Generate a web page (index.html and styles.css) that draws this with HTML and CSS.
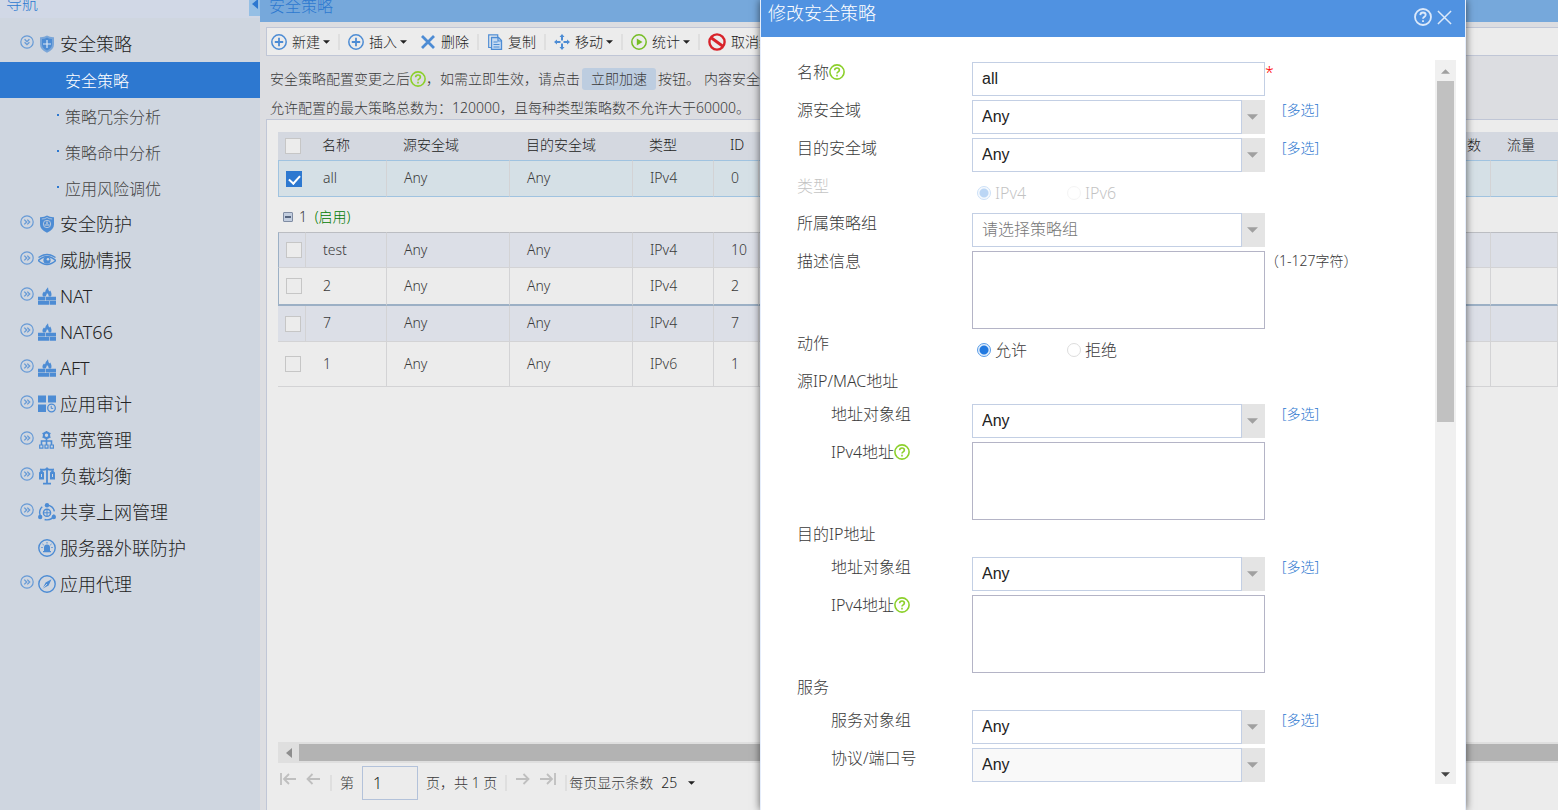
FILE: index.html
```html
<!DOCTYPE html>
<html lang="zh-CN">
<head>
    <meta charset="UTF-8">
    <meta name="viewport" content="width=device-width, initial-scale=1.0">
    <title>安全策略</title>
    <link rel="stylesheet" href="styles.css">
</head>
<body>

<svg class="sprite" aria-hidden="true">
    <symbol id="i-more" viewBox="0 0 14 14"><circle cx="7" cy="7" r="6.2" fill="none" stroke="currentColor" stroke-width="1.2"/><path d="M4.3 4.6 6.7 7 4.3 9.4M7.3 4.6 9.7 7 7.3 9.4" fill="none" stroke="currentColor" stroke-width="1.3"/></symbol>
    <symbol id="i-open" viewBox="0 0 14 14"><circle cx="7" cy="7" r="6.2" fill="none" stroke="currentColor" stroke-width="1.2"/><path d="M4.6 4.3 7 6.7 9.4 4.3M4.6 7.3 7 9.7 9.4 7.3" fill="none" stroke="currentColor" stroke-width="1.3"/></symbol>
    <symbol id="i-shield" viewBox="0 0 18 18"><path d="M2 2.2Q6 2.4 9 .4q3 2 7 1.8v7.3q0 5-7 8.3-7-3.3-7-8.3z" fill="currentColor" opacity=".65"/><path d="M4 4q3 0 5-1.5Q11 4 14 4v5.4q0 3.6-5 6.2-5-2.6-5-6.2z" fill="currentColor"/><path d="M9 5v8M5 9h8" stroke="#dbe6f4" stroke-width="1.2"/></symbol>
    <symbol id="i-guard" viewBox="0 0 18 18"><path d="M2 2.2Q6 2.4 9 .4q3 2 7 1.8v7.3q0 5-7 8.3-7-3.3-7-8.3z" fill="currentColor"/><path d="M3.8 4Q7 4 9 2.5 11 4 14.2 4" fill="none" stroke="#cfd6e0" stroke-width=".7"/><circle cx="9" cy="9" r="3.7" fill="none" stroke="#cfd6e0" stroke-width=".8"/><path d="M9 6.5V9M6.5 10h5" stroke="#cfd6e0" stroke-width="1.2"/></symbol>
    <symbol id="i-eye" viewBox="0 0 18 18"><path d="M.5 6.5Q9 .5 17.5 6.5" fill="none" stroke="currentColor" stroke-width="1.3"/><path d="M.3 9.5Q9 1.5 17.7 9.5 9 17.5.3 9.5z" fill="none" stroke="currentColor" stroke-width="1.4"/><circle cx="9" cy="9.2" r="3.6" fill="currentColor"/><circle cx="10" cy="8.2" r="1.3" fill="#cfd6e0"/></symbol>
    <symbol id="i-fire" viewBox="0 0 18 18"><path d="M5 9.5Q3.500 7 6 4.500l1 1Q7.500 2.500 10 .2q0 2.800 1.500 4.300l.8-1q2 3.500.7 6h-2.300Q11 7.500 9 6 8.500 8 7.500 9.500z" fill="currentColor"/><path d="M0 9.800h7v3.600H0zM7.600 9.800H18v3.600H7.600zM0 14h11v3.800H0zM11.600 14H18v3.800h-6.400z" fill="currentColor"/></symbol>
    <symbol id="i-audit" viewBox="0 0 18 18"><path d="M0 .5h8v7H0zM10 .5h8v7h-8zM0 9.500h8v7.500H0z" fill="currentColor"/><circle cx="13.500" cy="13" r="3.800" fill="none" stroke="currentColor" stroke-width="1.300"/><path d="M13.200 10.800v2.600h2" fill="none" stroke="currentColor"/></symbol>
    <symbol id="i-band" viewBox="0 0 18 18"><circle cx="8.500" cy="4.300" r="2.700" fill="none" stroke="currentColor" stroke-width="2"/><path d="M8.500 0v1.500M4.600 2l1.200 1M12.400 2l-1.200 1M4.600 6.600l1.200-1M12.400 6.600l-1.200-1" stroke="currentColor" stroke-width="1.500"/><path d="M8.500 7v7M3.500 14V10h10v4" fill="none" stroke="currentColor" stroke-width="1.600"/><path d="M1.700 14h3.200v3.200H1.700zM7 14h3v3.200H7zM12.200 14h3.200v3.200h-3.200z" fill="none" stroke="currentColor" stroke-width="1.200"/></symbol>
    <symbol id="i-balance" viewBox="0 0 18 18"><path d="M9 .5v16M5 16.700h8M2 2.500q4 .8 7-.8 3 1.600 7 .8" fill="none" stroke="currentColor" stroke-width="1.800"/><path d="M1 5.500 3.500 3 6 5.500v7H1zM12 5.500 14.500 3 17 5.500v7h-5z" fill="currentColor"/><path d="M3 7h1v3H3zM14 7h1v3h-1z" fill="#cfd6e0"/></symbol>
    <symbol id="i-share" viewBox="0 0 18 18"><circle cx="9" cy="9.500" r="7.400" fill="none" stroke="currentColor" stroke-width="1.400" stroke-dasharray="12 3.500" stroke-dashoffset="-2"/><circle cx="9" cy="2.200" r="2.200" fill="currentColor"/><circle cx="2.200" cy="14" r="2.200" fill="currentColor"/><circle cx="15.800" cy="14" r="2.200" fill="currentColor"/><circle cx="9" cy="9.800" r="3.600" fill="none" stroke="currentColor" stroke-width="1.400"/><path d="M5.500 9.800h7M9 6.500v6.500" stroke="currentColor"/></symbol>
    <symbol id="i-alarm" viewBox="0 0 18 18"><circle cx="9" cy="9" r="8.200" fill="none" stroke="currentColor" stroke-width="1.400"/><path d="M6 12V8.500q0-3 3-3t3 3V12h1v1.300H5V12z" fill="currentColor"/><path d="M9 3v1.500M4.500 5l1.200 1M13.500 5l-1.200 1M3.300 8.500h1.400M13.300 8.500h1.400" stroke="currentColor"/></symbol>
    <symbol id="i-compass" viewBox="0 0 18 18"><circle cx="9" cy="9" r="8.200" fill="none" stroke="currentColor" stroke-width="1.400"/><path d="M13.500 4.200 10.600 10.400 4.500 13.800 7.600 7.600z" fill="currentColor"/><path d="M4.500 13.800 9 9" stroke="#cfd6e0"/></symbol>
    <symbol id="i-add" viewBox="0 0 16 16"><circle cx="8" cy="8" r="7.200" fill="none" stroke="currentColor" stroke-width="1.500"/><path d="M8 3.800v8.400M3.800 8h8.400" stroke="currentColor" stroke-width="1.800"/></symbol>
    <symbol id="i-del" viewBox="0 0 16 16"><path d="M2 2l12 12M14 2 2 14" stroke="currentColor" stroke-width="2.800"/></symbol>
    <symbol id="i-copy" viewBox="0 0 16 16"><path d="M4 13.500H1.700V.8h9V3" fill="none" stroke="currentColor" stroke-width="1.200"/><path d="M4.500 3.500h7l3 3v9h-10z" fill="#c5daf2" stroke="currentColor" stroke-width="1.300"/><path d="M11 3.500v3.500h3.500M6.500 8h4M6.500 10.500h6M6.500 13h6" fill="none" stroke="currentColor" stroke-width="1.200"/></symbol>
    <symbol id="i-move" viewBox="0 0 16 16"><path d="M8 2v4.500M8 9.500v4.500M2 8h4.500M9.500 8h4.500" stroke="currentColor" stroke-width="2"/><path d="M8 0l2.500 3h-5zM8 16l2.500-3h-5zM0 8l3-2.500v5zM16 8l-3-2.500v5z" fill="currentColor"/></symbol>
    <symbol id="i-stat" viewBox="0 0 16 16"><circle cx="8" cy="8" r="7.200" fill="none" stroke="currentColor" stroke-width="1.500"/><path d="M5.800 4.500 11.500 8l-5.700 3.500z" fill="currentColor"/></symbol>
    <symbol id="i-ban" viewBox="0 0 18 18"><circle cx="9" cy="9" r="7.600" fill="none" stroke="currentColor" stroke-width="2.400"/><path d="M3.500 5 14.500 13" stroke="currentColor" stroke-width="2.800"/></symbol>
    <symbol id="i-help" viewBox="0 0 16 16"><circle cx="8" cy="8" r="7.100" fill="none" stroke="currentColor" stroke-width="1.600"/><path d="M5.600 6.300Q5.700 4 8 4t2.400 2.100q0 1.100-1.200 1.800T8 9.600" fill="none" stroke="currentColor" stroke-width="1.600"/><path d="M7.200 10.800h1.600v1.600H7.200z" fill="currentColor"/></symbol>
    <symbol id="i-close" viewBox="0 0 16 16"><path d="M1 1l14 14M15 1 1 15" stroke="currentColor" stroke-width="1.600"/></symbol>
    <symbol id="i-down" viewBox="0 0 12 6"><path d="M0 0h12L6 6z" fill="currentColor"/></symbol>
    <symbol id="i-up" viewBox="0 0 12 6"><path d="M0 6h12L6 0z" fill="currentColor"/></symbol>
    <symbol id="i-left" viewBox="0 0 6 10"><path d="M6 0v10L0 5z" fill="currentColor"/></symbol>
    <symbol id="i-prev" viewBox="0 0 16 12"><path d="M2 6h13M7.500 1l-5 5 5 5" fill="none" stroke="currentColor" stroke-width="1.800"/></symbol>
    <symbol id="i-first" viewBox="0 0 16 12"><path d="M1 0v12M4 6h12M9 1 4 6l5 5" fill="none" stroke="currentColor" stroke-width="1.800"/></symbol>
    <symbol id="i-next" viewBox="0 0 16 12"><path d="M1 6h13M8.500 1l5 5-5 5" fill="none" stroke="currentColor" stroke-width="1.800"/></symbol>
    <symbol id="i-last" viewBox="0 0 16 12"><path d="M15 0v12M0 6h12M7 1l5 5-5 5" fill="none" stroke="currentColor" stroke-width="1.800"/></symbol>
</svg>

<div class="app">
    <aside class="sidebar">
        <div class="side-head">导航</div>
        <button type="button" class="fold" aria-label="收起导航"><svg><use href="#i-left"/></svg></button>
        <nav class="menu">
            <a href="#" class="item"><svg class="more"><use href="#i-open"/></svg><svg class="ico"><use href="#i-shield"/></svg>安全策略</a>
            <a href="#" class="sub active">安全策略</a>
            <a href="#" class="sub">策略冗余分析</a>
            <a href="#" class="sub">策略命中分析</a>
            <a href="#" class="sub">应用风险调优</a>
            <a href="#" class="item"><svg class="more"><use href="#i-more"/></svg><svg class="ico"><use href="#i-guard"/></svg>安全防护</a>
            <a href="#" class="item"><svg class="more"><use href="#i-more"/></svg><svg class="ico"><use href="#i-eye"/></svg>威胁情报</a>
            <a href="#" class="item"><svg class="more"><use href="#i-more"/></svg><svg class="ico"><use href="#i-fire"/></svg>NAT</a>
            <a href="#" class="item"><svg class="more"><use href="#i-more"/></svg><svg class="ico"><use href="#i-fire"/></svg>NAT66</a>
            <a href="#" class="item"><svg class="more"><use href="#i-more"/></svg><svg class="ico"><use href="#i-fire"/></svg>AFT</a>
            <a href="#" class="item"><svg class="more"><use href="#i-more"/></svg><svg class="ico"><use href="#i-audit"/></svg>应用审计</a>
            <a href="#" class="item"><svg class="more"><use href="#i-more"/></svg><svg class="ico"><use href="#i-band"/></svg>带宽管理</a>
            <a href="#" class="item"><svg class="more"><use href="#i-more"/></svg><svg class="ico"><use href="#i-balance"/></svg>负载均衡</a>
            <a href="#" class="item"><svg class="more"><use href="#i-more"/></svg><svg class="ico"><use href="#i-share"/></svg>共享上网管理</a>
            <a href="#" class="item"><svg class="more"></svg><svg class="ico"><use href="#i-alarm"/></svg>服务器外联防护</a>
            <a href="#" class="item"><svg class="more"><use href="#i-more"/></svg><svg class="ico"><use href="#i-compass"/></svg>应用代理</a>
        </nav>
    </aside>

    <main class="main">
        <h1 class="main-head">安全策略</h1>
        <div class="toolbar">
            <button type="button" class="tool"><svg><use href="#i-add"/></svg>新建<svg class="caret"><use href="#i-down"/></svg></button>
            <i class="sep"></i>
            <button type="button" class="tool"><svg><use href="#i-add"/></svg>插入<svg class="caret"><use href="#i-down"/></svg></button>
            <button type="button" class="tool spaced"><svg><use href="#i-del"/></svg>删除</button>
            <i class="sep"></i>
            <button type="button" class="tool"><svg><use href="#i-copy"/></svg>复制</button>
            <i class="sep"></i>
            <button type="button" class="tool"><svg><use href="#i-move"/></svg>移动<svg class="caret"><use href="#i-down"/></svg></button>
            <i class="sep"></i>
            <button type="button" class="tool"><svg class="green"><use href="#i-stat"/></svg>统计<svg class="caret"><use href="#i-down"/></svg></button>
            <i class="sep"></i>
            <button type="button" class="tool"><svg class="ban"><use href="#i-ban"/></svg>取消统计</button>
        </div>

        <div class="notice">
            <p>安全策略配置变更之后<svg class="help"><use href="#i-help"/></svg>，如需立即生效，请点击<button type="button" class="speed">立即加速</button>按钮。<span class="tip">内容安全</span></p>
            <p>允许配置的最大策略总数为：120000，且每种类型策略数不允许大于60000。</p>
        </div>

        <section class="panel">
            <table class="grid">
                <colgroup>
                    <col class="c-check"><col class="c-name"><col class="c-zone"><col class="c-zone"><col class="c-type"><col class="c-id"><col><col class="c-flow">
                </colgroup>
                <thead>
                    <tr>
                        <th class="check"><input type="checkbox" aria-label="全选"></th>
                        <th>名称</th><th>源安全域</th><th>目的安全域</th><th>类型</th><th>ID</th><th class="hits">命中数</th><th>流量</th>
                    </tr>
                </thead>
                <tbody>
                    <tr class="selected">
                        <td class="check"><input type="checkbox" checked aria-label="all"></td>
                        <td>all</td><td>Any</td><td>Any</td><td>IPv4</td><td>0</td><td></td><td></td>
                    </tr>
                    <tr class="group">
                        <td colspan="8"><i class="minus"></i>1 <span>(启用)</span></td>
                    </tr>
                    <tr class="odd framed top">
                        <td class="check"><input type="checkbox" aria-label="test"></td>
                        <td>test</td><td>Any</td><td>Any</td><td>IPv4</td><td>10</td><td></td><td></td>
                    </tr>
                    <tr class="framed end">
                        <td class="check"><input type="checkbox" aria-label="2"></td>
                        <td>2</td><td>Any</td><td>Any</td><td>IPv4</td><td>2</td><td></td><td></td>
                    </tr>
                    <tr class="odd">
                        <td class="check"><input type="checkbox" aria-label="7"></td>
                        <td>7</td><td>Any</td><td>Any</td><td>IPv4</td><td>7</td><td></td><td></td>
                    </tr>
                    <tr class="tall">
                        <td class="check"><input type="checkbox" aria-label="1"></td>
                        <td>1</td><td>Any</td><td>Any</td><td>IPv6</td><td>1</td><td></td><td></td>
                    </tr>
                </tbody>
            </table>

            <div class="hscroll"><svg><use href="#i-left"/></svg><div class="hthumb"></div></div>

            <div class="pager">
                <button type="button" class="page-btn" aria-label="首页"><svg><use href="#i-first"/></svg></button>
                <button type="button" class="page-btn" aria-label="上一页"><svg><use href="#i-prev"/></svg></button>
                <i class="sep"></i>
                <label for="page">第</label>
                <input type="text" id="page" class="page-input" value="1">
                <span>页，共 1 页</span>
                <i class="sep"></i>
                <button type="button" class="page-btn" aria-label="下一页"><svg><use href="#i-next"/></svg></button>
                <button type="button" class="page-btn" aria-label="末页"><svg><use href="#i-last"/></svg></button>
                <i class="sep"></i>
                <label for="size" class="size-label">每页显示条数</label>
                <select id="size" class="size"><option>25</option></select>
                <svg class="caret"><use href="#i-down"/></svg>
            </div>
        </section>
    </main>
</div>

<div class="dialog" role="dialog" aria-labelledby="dialog-title">
    <div class="dialog-head">
        <h2 id="dialog-title">修改安全策略</h2>
        <button type="button" class="head-btn big" aria-label="帮助"><svg><use href="#i-help"/></svg></button>
        <button type="button" class="head-btn" aria-label="关闭"><svg><use href="#i-close"/></svg></button>
    </div>
    <div class="dialog-body">
        <form class="form">
            <div class="row">
                <label for="name">名称<svg class="help"><use href="#i-help"/></svg></label>
                <input type="text" id="name" class="text" value="all">
                <span class="required">*</span>
            </div>
            <div class="row">
                <label for="src-zone">源安全域</label>
                <div class="combo"><select id="src-zone"><option>Any</option></select><span class="arrow"><svg><use href="#i-down"/></svg></span></div>
                <a href="#" class="multi">[多选]</a>
            </div>
            <div class="row">
                <label for="dst-zone">目的安全域</label>
                <div class="combo"><select id="dst-zone"><option>Any</option></select><span class="arrow"><svg><use href="#i-down"/></svg></span></div>
                <a href="#" class="multi">[多选]</a>
            </div>
            <div class="row disabled">
                <span>类型</span>
                <div class="radios">
                    <label><input type="radio" name="type" checked disabled>IPv4</label>
                    <label><input type="radio" name="type" disabled>IPv6</label>
                </div>
            </div>
            <div class="row">
                <label for="policy-group">所属策略组</label>
                <div class="combo"><select id="policy-group" class="empty"><option>请选择策略组</option></select><span class="arrow"><svg><use href="#i-down"/></svg></span></div>
            </div>
            <div class="row">
                <label for="desc">描述信息</label>
                <textarea id="desc"></textarea>
                <span class="hint">（1-127字符）</span>
            </div>
            <div class="row">
                <span>动作</span>
                <div class="radios">
                    <label><input type="radio" name="action" checked>允许</label>
                    <label><input type="radio" name="action">拒绝</label>
                </div>
            </div>
            <h3>源IP/MAC地址</h3>
            <div class="row inner">
                <label for="src-group">地址对象组</label>
                <div class="combo"><select id="src-group"><option>Any</option></select><span class="arrow"><svg><use href="#i-down"/></svg></span></div>
                <a href="#" class="multi">[多选]</a>
            </div>
            <div class="row inner">
                <label for="src-ip">IPv4地址<svg class="help"><use href="#i-help"/></svg></label>
                <textarea id="src-ip"></textarea>
            </div>
            <h3>目的IP地址</h3>
            <div class="row inner">
                <label for="dst-group">地址对象组</label>
                <div class="combo"><select id="dst-group"><option>Any</option></select><span class="arrow"><svg><use href="#i-down"/></svg></span></div>
                <a href="#" class="multi">[多选]</a>
            </div>
            <div class="row inner">
                <label for="dst-ip">IPv4地址<svg class="help"><use href="#i-help"/></svg></label>
                <textarea id="dst-ip"></textarea>
            </div>
            <h3>服务</h3>
            <div class="row inner">
                <label for="service">服务对象组</label>
                <div class="combo"><select id="service"><option>Any</option></select><span class="arrow"><svg><use href="#i-down"/></svg></span></div>
                <a href="#" class="multi">[多选]</a>
            </div>
            <div class="row inner">
                <label for="port">协议/端口号</label>
                <div class="combo"><select id="port" disabled><option>Any</option></select><span class="arrow"><svg><use href="#i-down"/></svg></span></div>
            </div>
        </form>
        <div class="vscroll">
            <svg class="up"><use href="#i-up"/></svg>
            <div class="track"><div class="vthumb"></div></div>
            <svg class="down"><use href="#i-down"/></svg>
        </div>
    </div>
</div>

</body>
</html>
```
FILE: styles.css
```css
* {
    box-sizing: border-box;
}
body {
    margin: 0;
    overflow: hidden;
    font-family: "Noto Sans", "Noto Sans CJK SC", sans-serif;
    font-weight: 300;
    font-size: 14px;
    line-height: 20px;
    color: #3a3a3a;
}
h1, h2, h3, p {
    margin: 0;
    font-weight: inherit;
}
a {
    text-decoration: none;
}
button, input, select, textarea {
    font: inherit;
    color: inherit;
    margin: 0;
    padding: 0;
    border: 0;
    border-radius: 0;
    background: none;
}
select {
    appearance: none;
}
svg {
    flex: none;
}
.sprite {
    position: absolute;
    width: 0;
    height: 0;
}
.app {
    display: flex;
    height: 100vh;
}

/* navigation */
.sidebar {
    position: relative;
    flex: none;
    width: 260px;
    background: #cfd6e0;
}
.side-head {
    height: 18px;
    padding-left: 6px;
    overflow: hidden;
    background: #d1d8e6;
    color: #2d78d0;
    font-size: 16px;
    line-height: 6px;
}
.fold {
    position: absolute;
    top: 0;
    right: 0;
    width: 11px;
    height: 16px;
    background: #95bfe5;
    color: #2d78d0;
}
.fold svg {
    display: block;
    width: 6px;
    height: 10px;
    margin: -8px auto 0;
}
.menu {
    padding-top: 8px;
}
.item {
    display: flex;
    align-items: center;
    gap: 4px;
    height: 36px;
    padding-left: 20px;
    color: #222;
    font-size: 18px;
}
.item svg {
    color: #4d8cd4;
}
.item .more {
    width: 14px;
    height: 14px;
    margin-bottom: 4px;
    opacity: 0.8;
}
.item .ico {
    width: 18px;
    height: 18px;
}
.sub {
    display: flex;
    align-items: center;
    height: 36px;
    padding: 2px 0 0 57px;
    color: #444;
    font-size: 16px;
}
.sub::before {
    content: "";
    width: 2px;
    height: 2px;
    margin: 0 6px 4px 0;
    background: #2d78d0;
}
.sub.active {
    background: #2d78d0;
    color: #fff;
}

/* main area */
.main {
    display: flex;
    flex: 1;
    flex-direction: column;
    min-width: 0;
    background: #dcdde1;
}
.main-head {
    height: 22px;
    padding-left: 9px;
    background: #76a8db;
    color: #2d78d0;
    font-size: 16px;
    line-height: 13px;
}
.toolbar {
    display: flex;
    align-items: center;
    gap: 8px;
    height: 29px;
    margin: 5px 0 0 6px;
    padding-left: 4px;
    border: 1px solid #c0c6d6;
    border-right: 0;
    background: #ececec;
    overflow: hidden;
}
.tool {
    display: flex;
    flex: none;
    align-items: center;
    gap: 5px;
    color: #222;
}
.tool svg {
    width: 16px;
    height: 16px;
    color: #4d8cd4;
}
.tool.spaced {
    margin-left: 5px;
}
.tool svg.green {
    color: #76bd25;
}
.tool svg.ban {
    width: 18px;
    height: 18px;
    color: #d8232a;
}
.tool .caret, .pager .caret {
    width: 7px;
    height: 4px;
    color: #222;
}
.tool .caret {
    margin-left: -2px;
}
.sep {
    flex: none;
    width: 2px;
    height: 16px;
    background: #dfdfdf;
}
.notice {
    display: flex;
    flex-direction: column;
    gap: 7px;
    padding: 12px 0 0 10px;
    overflow: hidden;
    white-space: nowrap;
}
.notice p {
    display: flex;
    align-items: center;
    height: 22px;
}
.help {
    width: 16px;
    height: 16px;
    color: #8cd02b;
}
.speed {
    height: 22px;
    margin: 0 2px;
    padding: 0 9px;
    border-radius: 3px;
    background: #bdcde0;
}
.tip {
    margin-left: 4px;
}
.panel {
    display: flex;
    flex: 1;
    flex-direction: column;
    margin-left: 6px;
    padding: 12px 0 0 11px;
    border: 1px solid #c0c6d6;
    border-width: 1px 0 0 1px;
    background: #ececec;
}

/* policy table */
.grid {
    width: 100%;
    table-layout: fixed;
    border-collapse: separate;
    border-spacing: 0;
}
.c-check { width: 28px; }
.c-name { width: 81px; }
.c-zone { width: 123px; }
.c-type { width: 81px; }
.c-id { width: 45px; }
.c-flow { width: 67px; }
.grid th {
    height: 28px;
    padding: 0 0 2px 16px;
    background: #d4d8e0;
    color: #222;
    font-weight: inherit;
    text-align: left;
}
.grid td {
    height: 36px;
    padding: 0 0 1px 17px;
    border: 0 solid #d3d3d5;
    border-width: 0 1px 1px 0;
}
.grid .check {
    padding: 0 0 0 7px;
    border-right: 0;
}
.grid .odd .check {
    border-right: 1px solid #d3d3d5;
}
.grid .hits {
    padding-right: 10px;
    text-align: right;
}
.odd td {
    background: #dcdfe7;
}
.selected td {
    height: 37px;
    background: #d5e0e6;
    border-top: 1px solid #a0c3e0;
    border-bottom-color: #a0c3e0;
}
.selected .check {
    border-left: 1px solid #a0c3e0;
}
.grid .group td {
    height: 35px;
    padding: 4px 0 0 5px;
    border: 0;
}
.group span {
    margin-left: 4px;
    color: #007a00;
}
.minus {
    display: inline-block;
    width: 10px;
    height: 10px;
    margin-right: 6px;
    border: 1px solid #7f8ca3;
    border-radius: 1px;
    background: linear-gradient(#56657f, #56657f) center / 6px 2px no-repeat, #c3cedf;
}
.top td {
    border-top: 1px solid #bbbdc2;
}
.framed .check {
    border-left: 1px solid #9cb0c5;
}
.end td {
    height: 38px;
    border-bottom: 2px solid #9cb0c5;
}
.tall td {
    height: 45px;
}
.grid input {
    display: block;
    width: 16px;
    height: 16px;
    appearance: none;
    border: 1px solid #c6c6c6;
    background: #ececec;
}
.grid input:checked {
    border-color: #2d78d0;
    background: #2d78d0;
}
.grid input:checked::before {
    content: "";
    display: block;
    width: 5px;
    height: 9px;
    margin: 1px auto 0;
    border: solid #fff;
    border-width: 0 2px 2px 0;
    transform: rotate(42deg);
}

/* scrollbar and pager */
.hscroll {
    display: flex;
    align-items: center;
    height: 21px;
    margin-top: auto;
    background: #dfdfdf;
}
.hscroll svg {
    width: 6px;
    height: 10px;
    margin: 0 7px 0 8px;
    color: #8e8e8e;
}
.hthumb {
    flex: 1;
    height: 17px;
    background: #b3b3b3;
}
.pager {
    display: flex;
    align-items: center;
    gap: 8px;
    height: 47px;
    padding: 0 0 7px 2px;
    white-space: nowrap;
}
.page-btn {
    height: 20px;
    margin-right: 1px;
    color: #bfbfbf;
}
.page-btn svg {
    display: block;
    width: 16px;
    height: 12px;
    margin-bottom: 8px;
}
.page-input {
    width: 56px;
    height: 34px;
    padding: 0 10px;
    border: 1px solid #b3c2da;
    color: #222;
    font-size: 16px;
}
.size-label {
    margin-left: -6px;
}
.size {
    width: 19px;
    color: #222;
}

/* dialog */
.dialog {
    position: absolute;
    top: 0;
    right: 92px;
    bottom: 0;
    left: 760px;
    display: flex;
    flex-direction: column;
    border: 1px solid #e6eefc;
    border-width: 0 1px;
    background: #fff;
    box-shadow: 0 0 8px rgba(0, 0, 0, 0.6);
    font-size: 16px;
}
.dialog-head {
    display: flex;
    gap: 5px;
    height: 37px;
    padding: 0 13px 0 7px;
    background: #5092e1;
    color: #fff;
}
.dialog-head h2 {
    flex: 1;
    font-size: 18px;
    line-height: 27px;
}
.head-btn {
    height: 34px;
    color: #dce9fa;
}
.head-btn svg {
    display: block;
    width: 15px;
    height: 15px;
}
.head-btn.big svg {
    width: 18px;
    height: 18px;
}
.dialog-body {
    display: flex;
    flex: 1;
    min-height: 0;
    padding: 23px 9px 26px 36px;
}
.form {
    display: flex;
    flex: 1;
    flex-direction: column;
    gap: 4px;
    padding-top: 2px;
    overflow: hidden;
}
.row {
    display: grid;
    grid-template-columns: 175px 293px 1fr;
    min-height: 34px;
}
.row > label, .row > span {
    display: flex;
    align-items: center;
    height: 20px;
}
.inner > label {
    padding-left: 34px;
}
.form h3 {
    height: 29px;
    font-size: 16px;
}
.text, .combo {
    height: 34px;
    color: #222;
    font-family: "Liberation Sans", "Noto Sans CJK SC", sans-serif;
    font-weight: 400;
}
.text {
    padding: 0 9px;
    border: 1px solid #c3cfe4;
}
.combo {
    display: flex;
}
.combo select {
    flex: 1;
    padding: 0 9px;
    border: 1px solid #c3cfe4;
}
.combo select:disabled {
    background: #f9f9f9;
    opacity: 1;
}
.combo .empty {
    color: #777;
    font-weight: 300;
}
.arrow {
    display: flex;
    align-items: center;
    justify-content: center;
    width: 23px;
    padding-right: 2px;
    background: #e4e4e4;
    color: #a0a0a0;
}
.arrow svg {
    width: 11px;
    height: 6px;
}
.row textarea {
    height: 78px;
    border: 1px solid #b4b4c6;
    resize: none;
}
.row .required {
    color: #f00;
}
.row .multi {
    padding-left: 17px;
    color: #2d78d0;
    font-size: 14px;
}
.row .hint {
    font-size: 14px;
}
.radios {
    display: flex;
    padding-left: 5px;
}
.radios label {
    display: flex;
    align-items: center;
    gap: 4px;
    width: 90px;
}
.radios input {
    width: 14px;
    height: 14px;
    appearance: none;
    border: 1px solid #ddd;
    border-radius: 50%;
}
.radios input:checked {
    border-color: #5a9de8;
    background: radial-gradient(#2179e0 0 4px, #e3effc 5px);
}
.row.disabled {
    min-height: 33px;
    opacity: 0.3;
}

/* dialog scrollbar */
.vscroll {
    display: flex;
    flex-direction: column;
    align-items: center;
    width: 21px;
    background: #f0f0f0;
}
.vscroll svg {
    width: 9px;
    height: 5px;
    margin: 9px 0 7px;
    color: #a0a0a0;
}
.vscroll .down {
    color: #444;
}
.track {
    flex: 1;
}
.vthumb {
    width: 17px;
    height: 50%;
    background: #c1c1c1;
}
```
